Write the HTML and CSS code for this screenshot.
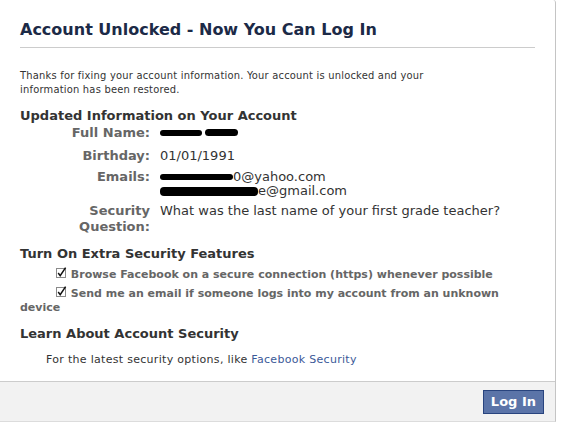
FILE: index.html
```html
<!DOCTYPE html>
<html>
<head>
<meta charset="utf-8">
<link rel="stylesheet" href="styles.css">
</head>
<body>
<div class="panel">
  <div class="content">
    <h2 class="title">Account Unlocked - Now You Can Log In</h2>
    <p class="intro">Thanks for fixing your account information. Your account is unlocked and your information has been restored.</p>

    <h3 class="section">Updated Information on Your Account</h3>
    <div class="info">
      <div class="label first">Full Name:</div>
      <div class="value"><span class="blot b-name1"></span><span class="blot b-name2"></span></div>
      <div class="label">Birthday:</div>
      <div class="value">01/01/1991</div>
      <div class="label">Emails:</div>
      <div class="value"><span class="blot b-mail1"></span>0@yahoo.com<br><span class="blot b-mail2"></span>e@gmail.com</div>
      <div class="label">Security<br>Question:</div>
      <div class="value">What was the last name of your first grade teacher?</div>
    </div>

    <h3 class="section gap">Turn On Extra Security Features</h3>
    <div class="checks">
      <div class="check"><svg class="cb" width="11" height="12" viewBox="0 0 11 12"><rect x="0.5" y="1.5" width="9" height="9" fill="#fff" stroke="#8a8a8a"/><path d="M2.2 6 L4.2 8.6 L9.6 0.6" fill="none" stroke="#111" stroke-width="1.5"/></svg> Browse Facebook on a secure connection (https) whenever possible</div>
      <div class="check"><svg class="cb" width="11" height="12" viewBox="0 0 11 12"><rect x="0.5" y="1.5" width="9" height="9" fill="#fff" stroke="#8a8a8a"/><path d="M2.2 6 L4.2 8.6 L9.6 0.6" fill="none" stroke="#111" stroke-width="1.5"/></svg> Send me an email if someone logs into my account from an unknown device</div>
    </div>

    <h3 class="section learn">Learn About Account Security</h3>
    <p class="latest">For the latest security options, like <a href="#" class="link">Facebook Security</a></p>
  </div>
  <div class="footer">
    <button class="login">Log In</button>
  </div>
</div>
</body>
</html>
```

FILE: styles.css
```css
html, body {
  margin: 0;
  padding: 0;
  background: #fff;
}
body {
  font-family: "DejaVu Sans", Verdana, sans-serif;
  color: #333;
}
.panel {
  width: 555px;
  border-right: 1px solid #c4c4c4;
  border-bottom: 1px solid #dcdcdc;
  border-top-right-radius: 3px;
  background: #fff;
}
.content {
  padding: 20px 20px 0 20px;
}
.title {
  margin: 0;
  font-size: 16px;
  line-height: 20px;
  font-weight: bold;
  color: #1c2a47;
  padding-bottom: 7px;
  border-bottom: 1px solid #ccc;
}
.intro {
  margin: 21px 0 0 0;
  font-family: "DejaVu Sans Condensed", "DejaVu Sans", sans-serif;
  font-size: 11px;
  line-height: 14px;
  letter-spacing: 0.22px;
  max-width: 450px;
  color: #333;
}
.section {
  margin: 11px 0 0 0;
  font-size: 13px;
  line-height: 16px;
  font-weight: bold;
  color: #333;
}
.section.gap {
  margin-top: 11px;
}
.section.learn {
  margin-top: 11px;
}
.info {
  margin-top: 1px;
  display: grid;
  grid-template-columns: 130px auto;
  column-gap: 10px;
  row-gap: 5px;
  align-items: baseline;
  font-size: 13px;
}
.label {
  text-align: right;
  font-weight: bold;
  color: #666;
  line-height: 16px;
}
.label.first {
  margin-bottom: 2px;
}
.value {
  line-height: 14px;
  color: #333;
}
.blot {
  display: inline-block;
  background: #000;
  height: 7px;
  border-radius: 4px;
  vertical-align: 1px;
}
.b-name1 { width: 42px; height: 6px; }
.b-name2 { width: 33px; height: 7px; margin-left: 3px; }
.b-mail1 { width: 73px; height: 6px; }
.b-mail2 { width: 98px; height: 9px; vertical-align: -1px; }
.checks {
  margin-top: 5px;
}
.check {
  font-size: 11px;
  line-height: 14px;
  font-weight: bold;
  color: #666;
  text-indent: 36px;
}
.check + .check {
  margin-top: 4px;
}
.cb {
  vertical-align: -1px;
}
.latest {
  margin: 11px 0 0 26px;
  font-family: "DejaVu Sans", sans-serif;
  font-size: 11px;
  line-height: 14px;
  letter-spacing: 0.3px;
  color: #333;
}
.link {
  color: #3b5998;
  text-decoration: none;
}
.footer {
  margin-top: 14px;
  background: #f2f2f2;
  border-top: 1px solid #ccc;
  padding: 8px 11px 7px 0;
  display: flex;
  justify-content: flex-end;
}
.login {
  font-family: "DejaVu Sans", Verdana, sans-serif;
  font-size: 13px;
  font-weight: bold;
  line-height: 16px;
  color: #fff;
  background: #5b74a8;
  border: 1px solid #29447e;
  padding: 3px 7px;
  margin: 0;
}
```
